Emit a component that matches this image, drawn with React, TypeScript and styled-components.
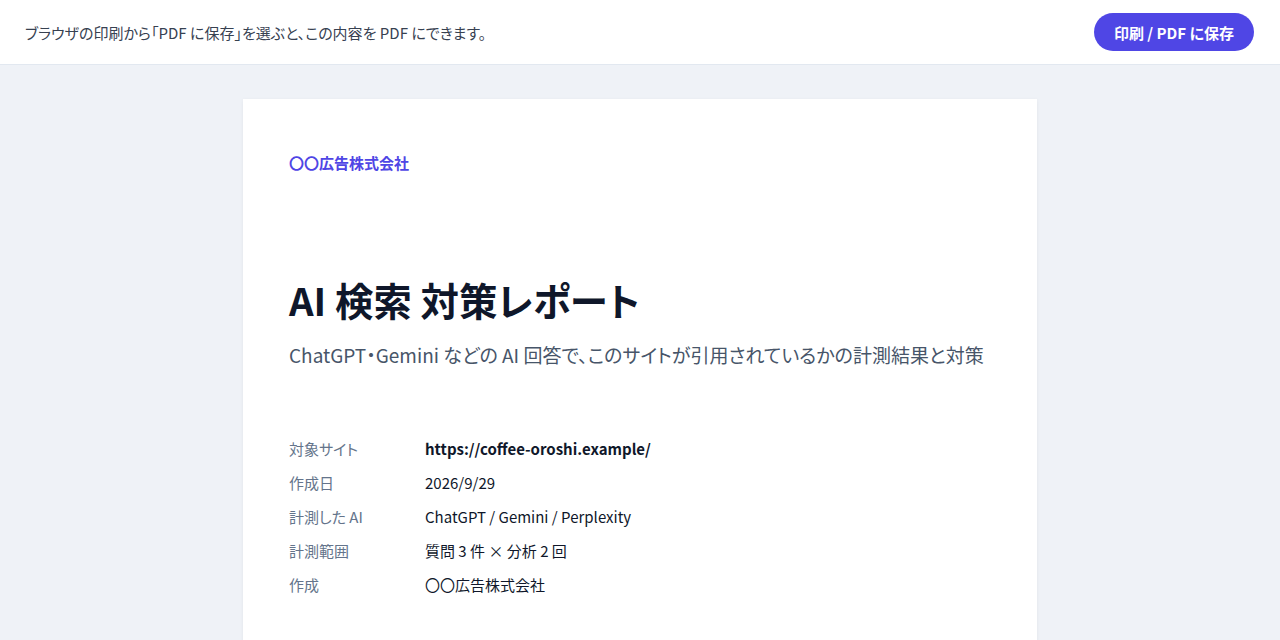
import React from "react";
import styled, { createGlobalStyle } from "styled-components";

const Global = createGlobalStyle`
  html, body { margin: 0; padding: 0; }
  body {
    background: #eff2f7;
    font-family: "Noto Sans CJK JP", "Noto Sans", sans-serif;
    color: #0f172a;
    font-feature-settings: "palt";
  }
`;

const TopBar = styled.header`
  height: 64px;
  background: #ffffff;
  border-bottom: 1px solid #e2e8f0;
  display: flex;
  align-items: center;
  justify-content: space-between;
  padding: 0 26px 0 25px;
`;

const Hint = styled.p`
  margin: 0;
  font-size: 15px;
  color: #374151;
`;

const PrintButton = styled.button`
  height: 38px;
  padding: 0 20px;
  border: none;
  border-radius: 999px;
  background: #4f46e5;
  color: #ffffff;
  font-family: inherit;
  font-feature-settings: "palt";
  font-size: 15px;
  font-weight: 700;
  cursor: pointer;
`;

const Sheet = styled.main`
  width: 794px;
  min-height: 1000px;
  margin: 34px auto 0;
  background: #ffffff;
  box-shadow: 0 1px 4px rgba(15, 23, 42, 0.06);
  padding: 52px 46px;
  box-sizing: border-box;
`;

const Company = styled.div`
  font-size: 15px;
  line-height: 24px;
  font-weight: 700;
  color: #4f46e5;
`;

const Title = styled.h1`
  margin: 100px 0 0;
  font-size: 38.4px;
  line-height: 49px;
  font-weight: 700;
  color: #0f172a;
`;

const Subtitle = styled.p`
  margin: 16px 0 0;
  font-size: 19px;
  line-height: 30px;
  color: #475569;
`;

const Meta = styled.dl`
  margin: 67px 0 0;
  display: grid;
  grid-template-columns: 136px 1fr;
  row-gap: 10px;
  font-size: 15px;
  line-height: 24px;
`;

const Label = styled.dt`
  color: #64748b;
`;

const Value = styled.dd<{ $strong?: boolean }>`
  margin: 0;
  color: #0f172a;
  font-weight: ${(p) => (p.$strong ? 600 : 400)};
`;

const rows: { label: string; value: string; strong?: boolean }[] = [
  { label: "対象サイト", value: "https://coffee-oroshi.example/", strong: true },
  { label: "作成日", value: "2026/9/29" },
  { label: "計測した AI", value: "ChatGPT / Gemini / Perplexity" },
  { label: "計測範囲", value: "質問 3 件 × 分析 2 回" },
  { label: "作成", value: "〇〇広告株式会社" },
];

export default function App() {
  return (
    <>
      <Global />
      <TopBar>
        <Hint>ブラウザの印刷から「PDF に保存」を選ぶと、この内容を PDF にできます。</Hint>
        <PrintButton type="button">印刷 / PDF に保存</PrintButton>
      </TopBar>
      <Sheet>
        <Company>〇〇広告株式会社</Company>
        <Title>AI 検索 対策レポート</Title>
        <Subtitle>ChatGPT・Gemini などの AI 回答で、このサイトが引用されているかの計測結果と対策</Subtitle>
        <Meta>
          {rows.map((r) => (
            <React.Fragment key={r.label}>
              <Label>{r.label}</Label>
              <Value $strong={r.strong}>{r.value}</Value>
            </React.Fragment>
          ))}
        </Meta>
      </Sheet>
    </>
  );
}
